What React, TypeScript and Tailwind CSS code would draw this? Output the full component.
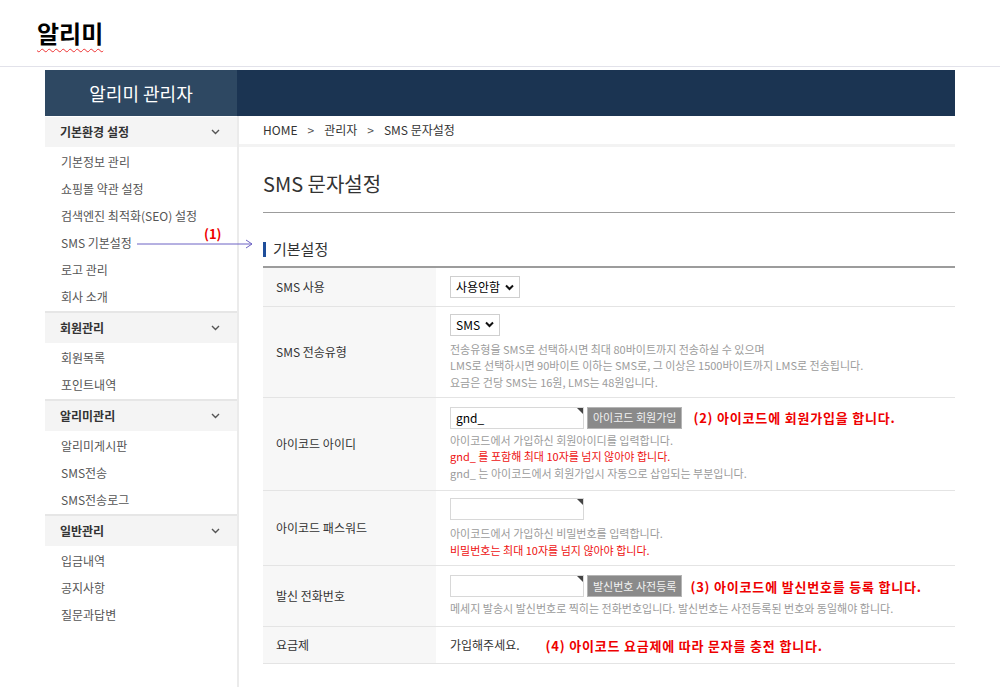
import React from 'react';

const FONT = { fontFamily: '"Noto Sans CJK KR", "Noto Sans", sans-serif' };

const menus = [
  { title: '기본환경 설정', items: ['기본정보 관리', '쇼핑몰 약관 설정', '검색엔진 최적화(SEO) 설정', 'SMS 기본설정', '로고 관리', '회사 소개'] },
  { title: '회원관리', items: ['회원목록', '포인트내역'] },
  { title: '알리미관리', items: ['알리미게시판', 'SMS전송', 'SMS전송로그'] },
  { title: '일반관리', items: ['입금내역', '공지사항', '질문과답변'] },
];

function Chevron() {
  return (
    <svg width="9" height="6" viewBox="0 0 9 6" className="text-[#555]">
      <path d="M1 1l3.5 3.5L8 1" fill="none" stroke="currentColor" strokeWidth="1.4" />
    </svg>
  );
}

function Select({ label }: { label: string }) {
  return (
    <div className="flex h-[22px] w-fit items-center gap-[5px] whitespace-nowrap border border-[#cfcfcf] bg-white px-[5px] text-[12px] text-black">
      <span className="leading-none">{label}</span>
      <svg width="9" height="7" viewBox="0 0 9 7">
        <path d="M1 1.5l3.5 3.5L8 1.5" fill="none" stroke="#111" strokeWidth="2" />
      </svg>
    </div>
  );
}

function Input({ value }: { value?: string }) {
  return (
    <div className="relative flex h-[22px] w-[134px] items-center border border-[#d8d8d8] bg-white px-[5px] text-[12px] text-black">
      <span className="leading-none">{value}</span>
      <span className="absolute right-0 top-0 h-0 w-0 border-l-[6px] border-t-[6px] border-l-transparent border-t-[#444]" />
    </div>
  );
}

function Btn({ children }: { children: React.ReactNode }) {
  return (
    <div className="ml-[3px] flex h-[22px] items-center whitespace-nowrap border border-[#b5b5b5] bg-[#8a8a8a] px-[5px] text-[11px] leading-none text-[#f2f2f2]">
      {children}
    </div>
  );
}

function Note({ children, className = '' }: { children: React.ReactNode; className?: string }) {
  return <span className={`whitespace-nowrap text-[13px] font-bold leading-none tracking-[0.8px] text-[#ee0000] ${className}`}>{children}</span>;
}

function Row({ label, h, children }: { label: string; h: string; children: React.ReactNode }) {
  return (
    <div className={`flex ${h} border-b border-[#e4e4e4]`}>
      <div className="flex w-[173px] items-center bg-[#f7f7f7] pl-[13px] text-[12px] text-[#333]">{label}</div>
      <div className="flex flex-1 flex-col justify-center pl-[14px]">{children}</div>
    </div>
  );
}

function Desc({ children, red }: { children: React.ReactNode; red?: boolean }) {
  return <p className={`text-[11px] leading-[16.5px] ${red ? 'text-[#ee1111]' : 'text-[#9b9b9b]'}`}>{children}</p>;
}

export default function App() {
  return (
    <div className="relative min-h-[687px] w-[1000px] overflow-hidden bg-white" style={FONT}>
      <div className="flex h-[67px] items-center border-b border-[#e2e2ea] pl-[37px]">
        <h1 className="text-[24px] font-bold leading-none text-black underline decoration-[#e33] decoration-wavy decoration-1 underline-offset-[5px]">
          알리미
        </h1>
      </div>

      <div className="ml-[45px] mt-[3px] w-[910px]">
        <div className="flex h-[46px]">
          <div className="flex w-[192px] items-center justify-center bg-[#2e4862] text-[18px] text-white">알리미 관리자</div>
          <div className="flex-1 bg-[#1b3452]" />
        </div>

        <div className="flex">
          <aside className="min-h-[571px] w-[194px] border-r-2 border-[#ebebeb]">
            {menus.map((m, i) => (
              <div key={m.title} className={i > 0 ? 'border-t-2 border-[#e6e6e6]' : 'pt-[1px]'}>
                <div className="flex h-[30px] items-center justify-between bg-[#f4f4f4] pl-[15px] pr-[17px] text-[12px] font-bold text-[#333]">
                  <span>{m.title}</span>
                  <Chevron />
                </div>
                <ul className="pb-[1px] pt-[1px]">
                  {m.items.map((it) => (
                    <li key={it} className="flex h-[27px] items-center pl-[16px] text-[12px] text-[#555]">
                      {it}
                    </li>
                  ))}
                </ul>
              </div>
            ))}
          </aside>

          <main className="flex-1">
            <div className="flex h-[31px] items-center gap-[10px] border-b-[3px] border-[#f3f3f3] pl-[24px] text-[12px] text-[#333]">
              <span>HOME</span>
              <span className="text-[#555]">&gt;</span>
              <span>관리자</span>
              <span className="text-[#555]">&gt;</span>
              <span>SMS 문자설정</span>
            </div>

            <div className="pl-[24px]">
              <div className="border-b border-[#9c9c9c] pb-[14px] pt-[23px]">
                <h2 className="text-[20px] leading-[28px] text-[#333]">SMS 문자설정</h2>
              </div>

              <div className="mt-[26px] flex items-center gap-[7px] border-b-2 border-[#9c9c9c] pb-[7px]">
                <span className="h-[15px] w-[3px] bg-[#1f4e9a]" />
                <span className="text-[15px] leading-[20px] text-[#333]">기본설정</span>
              </div>

              <Row label="SMS 사용" h="h-[39px]">
                <Select label="사용안함" />
              </Row>

              <Row label="SMS 전송유형" h="h-[91px]">
                <Select label="SMS" />
                <div className="mt-[5px]">
                  <Desc>전송유형을 SMS로 선택하시면 최대 80바이트까지 전송하실 수 있으며</Desc>
                  <Desc>LMS로 선택하시면 90바이트 이하는 SMS로, 그 이상은 1500바이트까지 LMS로 전송됩니다.</Desc>
                  <Desc>요금은 건당 SMS는 16원, LMS는 48원입니다.</Desc>
                </div>
              </Row>

              <Row label="아이코드 아이디" h="h-[93px]">
                <div className="flex items-center">
                  <Input value="gnd_" />
                  <Btn>아이코드 회원가입</Btn>
                  <Note className="ml-[11px]">(2) 아이코드에 회원가입을 합니다.</Note>
                </div>
                <div className="mt-[3px]">
                  <Desc>아이코드에서 가입하신 회원아이디를 입력합니다.</Desc>
                  <Desc red>gnd_ 를 포함해 최대 10자를 넘지 않아야 합니다.</Desc>
                  <Desc>gnd_ 는 아이코드에서 회원가입시 자동으로 삽입되는 부분입니다.</Desc>
                </div>
              </Row>

              <Row label="아이코드 패스워드" h="h-[75px]">
                <Input />
                <div className="mt-[5px]">
                  <Desc>아이코드에서 가입하신 비밀번호를 입력합니다.</Desc>
                  <Desc red>비밀번호는 최대 10자를 넘지 않아야 합니다.</Desc>
                </div>
              </Row>

              <Row label="발신 전화번호" h="h-[61px]">
                <div className="flex items-center">
                  <Input />
                  <Btn>발신번호 사전등록</Btn>
                  <Note className="ml-[8px]">(3) 아이코드에 발신번호를 등록 합니다.</Note>
                </div>
                <div className="mt-[3px]">
                  <Desc>메세지 발송시 발신번호로 찍히는 전화번호입니다. 발신번호는 사전등록된 번호와 동일해야 합니다.</Desc>
                </div>
              </Row>

              <Row label="요금제" h="h-[37px]">
                <div className="flex items-center">
                  <span className="text-[12px] text-[#333]">가입해주세요.</span>
                  <Note className="ml-[26px]">(4) 아이코드 요금제에 따라 문자를 충전 합니다.</Note>
                </div>
              </Row>
            </div>
          </main>
        </div>
      </div>

      {/* annotation (1) arrow across the sidebar */}
      <span className="absolute left-[204px] top-[227px] text-[13px] font-bold leading-none text-[#ee0000]">(1)</span>
      <svg className="absolute left-[136px] top-[238px]" width="120" height="12" viewBox="0 0 120 12">
        <path d="M1 6h115M110 2l6 4-6 4" fill="none" stroke="#6d62c4" strokeWidth="1" />
      </svg>
    </div>
  );
}
